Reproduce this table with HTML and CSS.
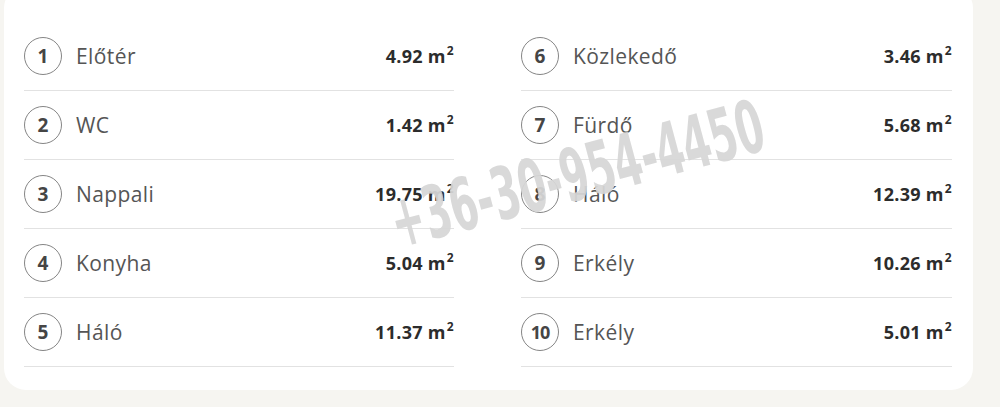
FILE: index.html
```html
<!DOCTYPE html>
<html lang="hu">
<head>
<meta charset="utf-8">
<title>Helyiségek</title>
<link rel="stylesheet" href="styles.css">
</head>
<body>
<div class="card">
  <div class="grid">
    <div class="col">
      <div class="row"><span class="num">1</span><span class="label">Előtér</span><span class="val">4.92 m<sup>2</sup></span></div>
      <div class="row"><span class="num">2</span><span class="label">WC</span><span class="val">1.42 m<sup>2</sup></span></div>
      <div class="row"><span class="num">3</span><span class="label">Nappali</span><span class="val">19.75 m<sup>2</sup></span></div>
      <div class="row"><span class="num">4</span><span class="label">Konyha</span><span class="val">5.04 m<sup>2</sup></span></div>
      <div class="row"><span class="num">5</span><span class="label">Háló</span><span class="val">11.37 m<sup>2</sup></span></div>
    </div>
    <div class="col">
      <div class="row"><span class="num">6</span><span class="label">Közlekedő</span><span class="val">3.46 m<sup>2</sup></span></div>
      <div class="row"><span class="num">7</span><span class="label">Fürdő</span><span class="val">5.68 m<sup>2</sup></span></div>
      <div class="row"><span class="num">8</span><span class="label">Háló</span><span class="val">12.39 m<sup>2</sup></span></div>
      <div class="row"><span class="num">9</span><span class="label">Erkély</span><span class="val">10.26 m<sup>2</sup></span></div>
      <div class="row"><span class="num num-wide">10</span><span class="label">Erkély</span><span class="val">5.01 m<sup>2</sup></span></div>
    </div>
  </div>
  <div class="watermark">+36-30-954-4450</div>
</div>
</body>
</html>
```

FILE: styles.css
```css
html, body {
  margin: 0;
  padding: 0;
  background: #f6f5f1;
  overflow: hidden;
}
body {
  width: 1000px;
  height: 407px;
  padding: 0 27px 0 4px;
  box-sizing: border-box;
}
.card {
  position: relative;
  margin-top: -14px;
  background: #ffffff;
  border-radius: 22px;
  padding: 36px 21px 23px 20px;
}
.grid {
  display: grid;
  grid-template-columns: 430px 431px;
  column-gap: 67px;
}
.row {
  display: flex;
  align-items: center;
  height: 68px;
  border-bottom: 1px solid #e2e2e2;
}
.num {
  width: 36px;
  height: 36px;
  border: 1.4px solid #858585;
  border-radius: 50%;
  display: flex;
  align-items: center;
  justify-content: center;
  font-family: "Open Sans", sans-serif;
  font-weight: 700;
  font-size: 19px;
  color: #454545;
  flex: none;
}
.num-wide {
  letter-spacing: -1px;
  font-size: 18px;
}
.label {
  margin-left: 14px;
  font-family: "Open Sans", sans-serif;
  font-weight: 500;
  font-size: 21px;
  letter-spacing: 0.4px;
  color: #555555;
  flex: 1;
}
.val {
  font-family: "Open Sans", sans-serif;
  font-weight: 700;
  font-size: 18px;
  color: #2c2c2c;
  letter-spacing: 0.3px;
}
.val sup {
  font-size: 12px;
  line-height: 0;
  vertical-align: 8px;
  margin-left: 1px;
}
.watermark {
  position: absolute;
  left: 573px;
  top: 188px;
  transform: translate(-50%, -50%) rotate(-15deg) scaleX(0.6);
  font-family: "Liberation Sans Narrow", "DejaVu Sans Condensed", "Liberation Sans", sans-serif;
  font-weight: 700;
  font-size: 73px;
  white-space: nowrap;
  color: rgba(150, 150, 150, 0.36);
  text-shadow: 0 0 1px rgba(255,255,255,0.9);
  pointer-events: none;
}
```
